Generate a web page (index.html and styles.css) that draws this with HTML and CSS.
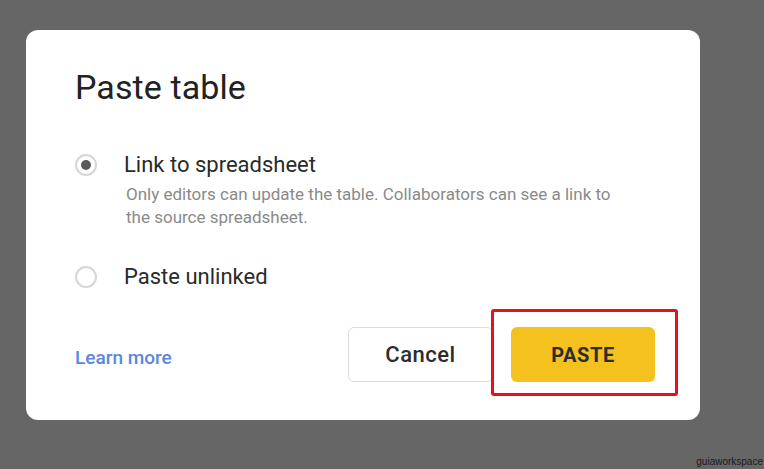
FILE: index.html
```html
<!DOCTYPE html>
<html lang="en">
<head>
<meta charset="utf-8">
<title>Paste table</title>
<link rel="stylesheet" href="styles.css">
</head>
<body>
<div class="page">
  <div class="dialog">
    <h1 class="title">Paste table</h1>
    <div class="options">
      <div class="option">
        <span class="radio checked"></span>
        <div class="option-text">
          <div class="label">Link to spreadsheet</div>
          <div class="desc">Only editors can update the table. Collaborators can see a link to the source spreadsheet.</div>
        </div>
      </div>
      <div class="option">
        <span class="radio"></span>
        <div class="option-text">
          <div class="label">Paste unlinked</div>
        </div>
      </div>
    </div>
    <div class="footer">
      <a class="learn" href="#">Learn more</a>
      <div class="actions">
        <button class="btn cancel">Cancel</button>
        <span class="highlight"><button class="btn paste">PASTE</button></span>
      </div>
    </div>
  </div>
  <div class="watermark">guiaworkspace</div>
</div>
</body>
</html>
```
FILE: styles.css
```css
* { box-sizing: border-box; }
html, body { margin: 0; padding: 0; }
body {
  width: 764px;
  height: 469px;
  background: #666666;
  font-family: Roboto, "Noto Sans", Arial, sans-serif;
  overflow: hidden;
}
.page {
  position: relative;
  width: 764px;
  height: 469px;
  padding: 30px 0 0 26px;
}
.dialog {
  width: 674px;
  height: 390px;
  background: #ffffff;
  border-radius: 12px;
  padding: 37px 45px 0 49px;
  display: flex;
  flex-direction: column;
}
.title {
  margin: 0;
  font-weight: 400;
  font-size: 34px;
  line-height: 40px;
  color: #222222;
  letter-spacing: 0.1px;
}
.options {
  margin-top: 44px;
  display: flex;
  flex-direction: column;
  gap: 34px;
}
.option {
  display: flex;
  align-items: flex-start;
}
.radio {
  flex: none;
  width: 22px;
  height: 22px;
  border: 2px solid #d6d6d6;
  border-radius: 50%;
  margin-top: 3px;
  margin-right: 27px;
  display: flex;
  align-items: center;
  justify-content: center;
}
.radio.checked::after {
  content: "";
  width: 10px;
  height: 10px;
  border-radius: 50%;
  background: #5a5a5a;
}
.label {
  font-size: 22px;
  line-height: 28px;
  color: #2a2a2a;
}
.desc {
  margin-top: 4px;
  margin-left: 2px;
  font-size: 17px;
  line-height: 23px;
  color: #8a8a8a;
  width: 500px;
}
.footer {
  margin-top: 36px;
  display: flex;
  align-items: center;
  justify-content: space-between;
}
.learn {
  font-size: 19px;
  font-weight: 500;
  color: #5b87de;
  text-decoration: none;
  margin-top: 6px;
}
.actions {
  display: flex;
  align-items: center;
  gap: 18px;
}
.btn {
  font-family: inherit;
  border-radius: 6px;
  height: 55px;
  font-weight: 500;
  color: #2d2d2d;
  cursor: pointer;
  padding: 0;
}
.cancel {
  width: 145px;
  background: #ffffff;
  border: 1px solid #dcdcdc;
  font-size: 22px;
  letter-spacing: 0.5px;
}
.highlight {
  position: relative;
  display: flex;
}
.highlight::after {
  content: "";
  position: absolute;
  left: -20px;
  right: -23px;
  top: -18px;
  bottom: -14px;
  border: 3px solid #e3121b;
  border-radius: 3px;
  pointer-events: none;
}
.paste {
  width: 144px;
  background: #f4c11f;
  border: none;
  font-size: 20px;
  font-weight: 700;
  letter-spacing: 0.6px;
}
.watermark {
  position: absolute;
  right: 1px;
  bottom: 1px;
  font-size: 10px;
  line-height: 12px;
  color: #1a1a1a;
  font-family: "Liberation Sans", Arial, sans-serif;
}
```
